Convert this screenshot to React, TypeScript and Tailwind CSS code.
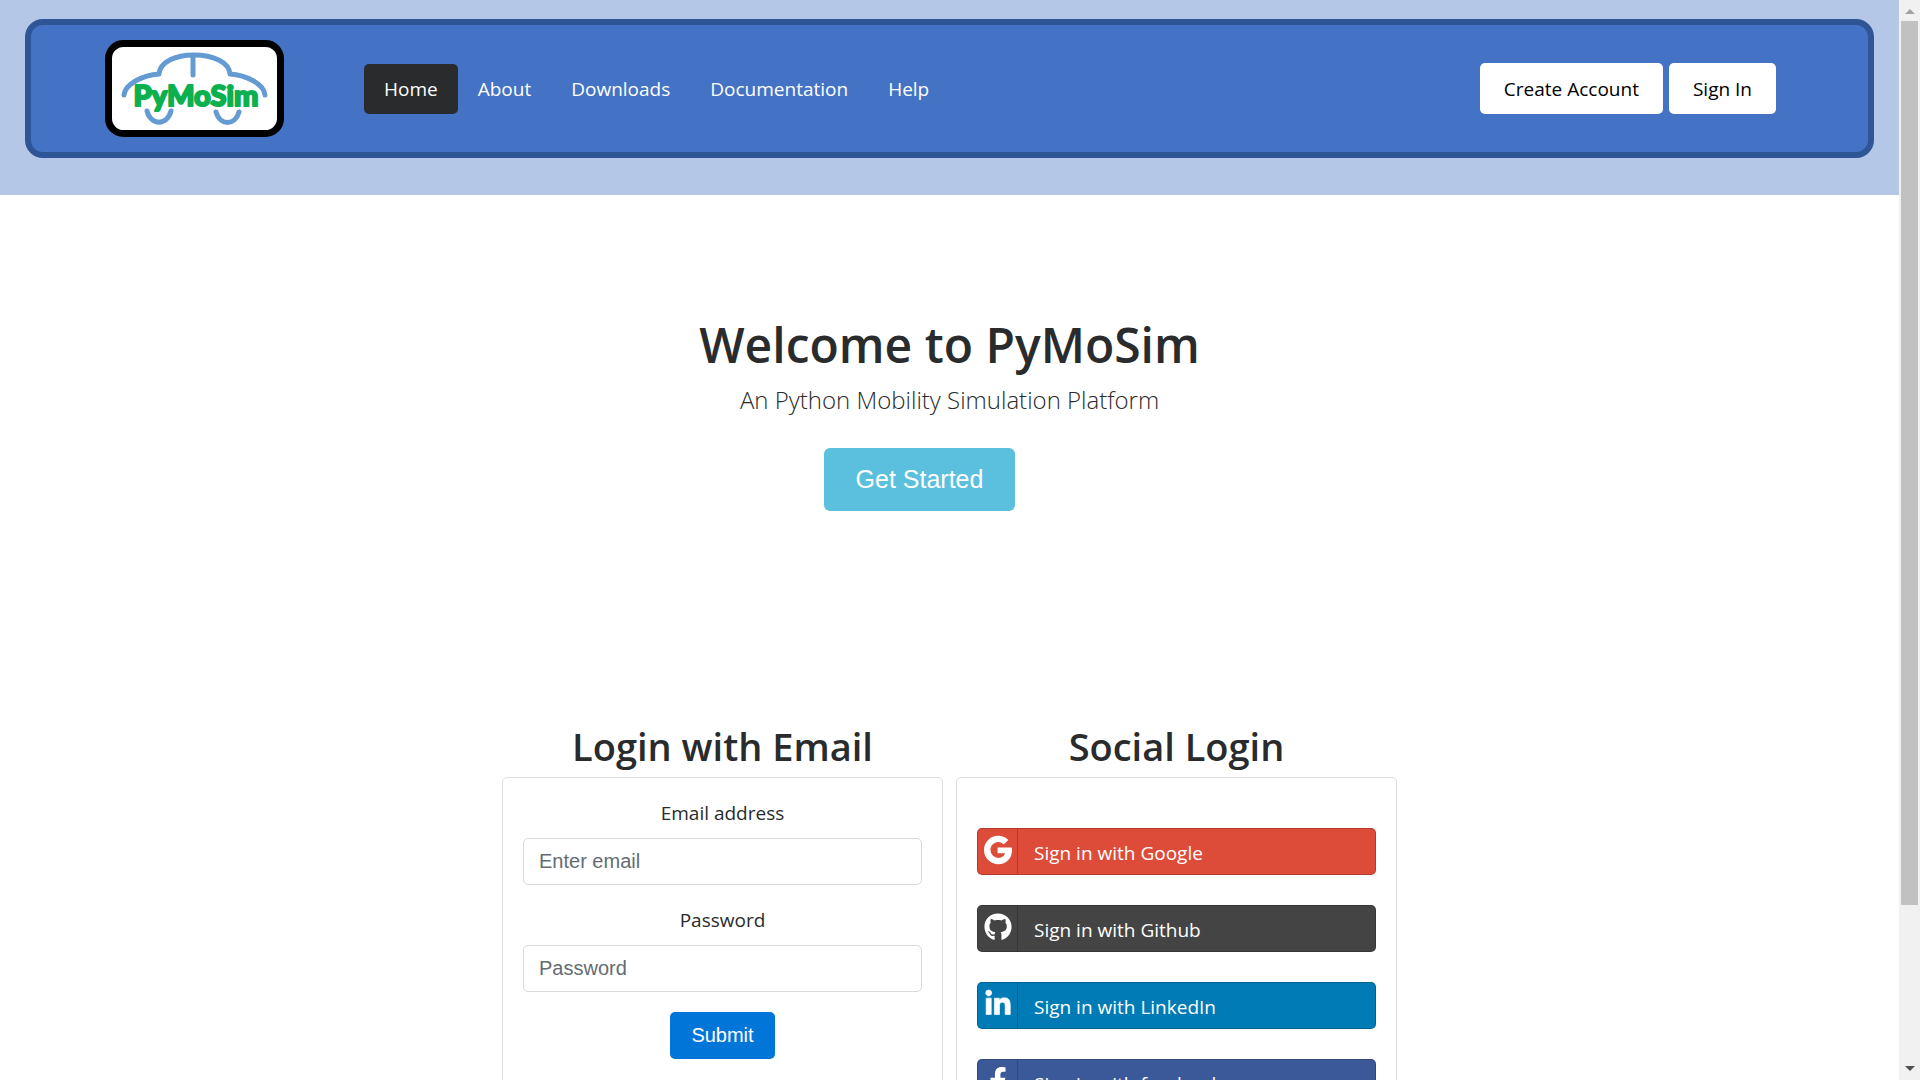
import type { ReactNode } from "react";
import { FaFacebookF, FaGithub, FaGoogle, FaLinkedinIn } from "react-icons/fa";

function Logo() {
  return (
    <a href="#home" aria-label="PyMoSim home" className="block shrink-0">
      <svg width="180" height="97" viewBox="0 0 180 97" className="block">
        <rect x="3.5" y="3.5" width="172" height="90" rx="15" fill="#fff" stroke="#000" strokeWidth="7" />
        <g fill="none" stroke="#649bd2" strokeWidth="5" strokeLinecap="round" strokeLinejoin="round">
          <path d="M19 55C20 44 38 35 54 34C55 22 70 15 89 15C108 15 124 22 125 34C141 35 159 44 160 55" />
          <path d="M88 16V35" />
          <path d="M42 71C46 86 62 86 66 71" />
          <path d="M111 72C115 86 130 86 134 72" />
        </g>
        <text
          x="91"
          y="66"
          textAnchor="middle"
          fontSize="29"
          className="fill-[#0cb04f] stroke-[#0cb04f] font-['Lato',sans-serif] font-black"
          strokeWidth="2"
          strokeLinejoin="round"
        >
          PyMoSim
        </text>
      </svg>
    </a>
  );
}

const navItems = ["Home", "About", "Downloads", "Documentation", "Help"];

function Header() {
  return (
    <header className="bg-[#b4c7e7] px-[25px] pt-[19px] pb-[37px]">
      <div className="flex items-center rounded-[18px] border-[6px] border-[#2f5597] bg-[#4472c4] py-[15px] pr-[92px] pl-[74px]">
        <Logo />
        <nav className="ml-[79px] flex">
          {navItems.map((item, i) => (
            <a
              key={item}
              href={`#${item.toLowerCase()}`}
              className={
                i === 0
                  ? "rounded-[5px] bg-[#292b2c] px-5 py-[10px] text-[19px] leading-[30px] text-white"
                  : "rounded-[5px] px-5 py-[10px] text-[19px] leading-[30px] text-white"
              }
            >
              {item}
            </a>
          ))}
        </nav>
        <div className="ml-auto flex gap-[6px]">
          <button type="button" className="rounded-[5px] bg-white px-6 pt-[11px] pb-[10px] text-[19px] leading-[30px] text-black">
            Create Account
          </button>
          <button type="button" className="rounded-[5px] bg-white px-6 pt-[11px] pb-[10px] text-[19px] leading-[30px] text-black">
            Sign In
          </button>
        </div>
      </div>
    </header>
  );
}

function Hero() {
  return (
    <section className="flex flex-col items-center pt-[120px] text-center">
      <h1 className="text-[48px] leading-[60px] font-semibold">Welcome to PyMoSim</h1>
      <p className="mt-[6px] text-[24px] leading-[38px] font-light">An Python Mobility Simulation Platform</p>
      <button
        type="button"
        className="mt-[29px] mr-[60px] rounded-[6px] bg-[#5bc0de] px-8 py-4 font-['Liberation_Sans',Arial,sans-serif] text-[25px] leading-[31px] text-white"
      >
        Get Started
      </button>
    </section>
  );
}

function Field({ id, label, type, placeholder }: { id: string; label: string; type: string; placeholder: string }) {
  return (
    <div className="mb-5 flex flex-col">
      <label htmlFor={id} className="mb-[10px] text-center text-[19px] leading-[30px]">
        {label}
      </label>
      <input
        id={id}
        type={type}
        placeholder={placeholder}
        className="h-[47px] rounded-[5px] border border-[#d9d9d9] px-[15px] font-['Liberation_Sans',Arial,sans-serif] text-[20px] placeholder:text-[#636c72]"
      />
    </div>
  );
}

function Column({ title, children }: { title: string; children: ReactNode }) {
  return (
    <section className="flex flex-col">
      <h2 className="mb-[6px] text-center text-[38px] leading-[50px] font-semibold">{title}</h2>
      <div className="grow rounded-[5px] border border-[#dfdfdf] p-5">{children}</div>
    </section>
  );
}

const providers = [
  { name: "Google", Icon: FaGoogle, style: "bg-[#dd4b39]", weight: 24 },
  { name: "Github", Icon: FaGithub, style: "bg-[#444444]", weight: 0 },
  { name: "LinkedIn", Icon: FaLinkedinIn, style: "bg-[#007bb6]", weight: 12 },
  { name: "facebook", Icon: FaFacebookF, style: "bg-[#3b5998]", weight: 0 },
];

function Logins() {
  return (
    <div className="mx-auto mt-[210px] grid w-full max-w-[895px] grid-cols-2 gap-[13px]">
      <Column title="Login with Email">
        <form className="flex flex-col" onSubmit={(e) => e.preventDefault()}>
          <Field id="email" label="Email address" type="email" placeholder="Enter email" />
          <Field id="password" label="Password" type="password" placeholder="Password" />
          <button
            type="submit"
            className="self-center rounded-[5px] bg-[#0275d8] px-[21px] py-2 font-['Liberation_Sans',Arial,sans-serif] text-[20px] leading-[31px] text-white"
          >
            Submit
          </button>
        </form>
      </Column>
      <Column title="Social Login">
        <div className="flex flex-col gap-[30px] py-[30px]">
          {providers.map(({ name, Icon, style, weight }) => (
            <button
              key={name}
              type="button"
              className={`${style} flex h-[47px] items-stretch rounded-[5px] border border-black/20 text-left text-[19px] text-white`}
            >
              <span className="flex w-10 shrink-0 justify-center border-r border-black/20 pt-[7px]">
                <Icon className="size-7 overflow-visible" strokeWidth={weight} />
              </span>
              <span className="pt-[9px] pl-4 leading-[30px]">Sign in with {name}</span>
            </button>
          ))}
        </div>
      </Column>
    </div>
  );
}

function ScrollRail() {
  return (
    <div className="flex w-[21px] shrink-0 flex-col items-center bg-[#f1f1f1]">
      <div className="flex h-[21px] items-center pt-[2px]">
        <svg width="10" height="5" viewBox="0 0 10 5">
          <path d="M5 0L10 5H0Z" fill="#a3a3a3" />
        </svg>
      </div>
      <div className="flex w-[17px] grow flex-col">
        <div className="grow-[884] bg-[#c1c1c1]" />
        <div className="grow-[154]" />
      </div>
      <div className="flex h-[21px] items-center pb-[3px]">
        <svg width="10" height="5" viewBox="0 0 10 5">
          <path d="M0 0H10L5 5Z" fill="#505050" />
        </svg>
      </div>
    </div>
  );
}

export default function App() {
  return (
    <div className="flex h-screen overflow-hidden bg-white font-['Open_Sans','Noto_Sans',sans-serif] text-[#292b2c]">
      <main className="min-w-0 grow overflow-hidden">
        <Header />
        <Hero />
        <Logins />
      </main>
      <ScrollRail />
    </div>
  );
}
